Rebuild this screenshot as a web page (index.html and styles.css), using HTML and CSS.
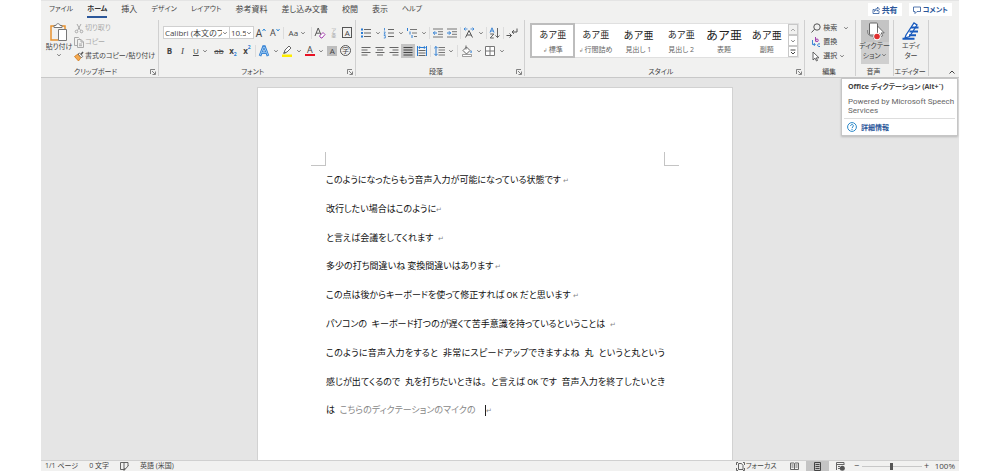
FILE: index.html
```html
<!DOCTYPE html>
<html lang="ja">
<head>
<meta charset="utf-8">
<meta name="viewport" content="width=device-width, initial-scale=1">
<title>文書</title>
<link rel="stylesheet" href="styles.css">
</head>
<body>
<svg class="defs" aria-hidden="true">
  <symbol id="chev" viewBox="0 0 6 6"><path d="M1.300 2.200l1.700 1.700 1.700-1.700" fill="none" stroke="#666" stroke-width=".9"/></symbol>
  <symbol id="launch" viewBox="0 0 6 6"><path d="M.5 5V.5H5M2 2l3 3M5.500 2.500v3h-3" fill="none" stroke="#666" stroke-width=".8"/></symbol>
</svg>
<div class="app">
  <header class="top">
    <nav class="tabs">
      <button class="tab kana">ファイル</button>
      <button class="tab kana active">ホーム</button>
      <button class="tab">挿入</button>
      <button class="tab kana">デザイン</button>
      <button class="tab kana">レイアウト</button>
      <button class="tab">参考資料</button>
      <button class="tab">差し込み文書</button>
      <button class="tab">校閲</button>
      <button class="tab">表示</button>
      <button class="tab kana">ヘルプ</button>
    </nav>
    <div class="actions">
      <button class="action"><svg width="8" height="8" viewBox="0 0 8 8" fill="none" stroke="#2b579a" stroke-width=".8"><path d="M2.500 3.500H1v4h6V5M2.500 5.500c0-2 1-3 3-3V1l2 2.200-2 2V4c-1.500 0-2.300.4-3 1.500z"/></svg>共有</button>
      <button class="action kana"><svg width="8" height="8" viewBox="0 0 8 8" fill="none" stroke="#2b579a" stroke-width=".8"><path d="M.5 1h7v4.500H4l-2 2v-2H.5z"/></svg>コメント</button>
    </div>
  </header>

  <div class="ribbon">
    <section class="group g-clip">
      <div class="clip">
        <button class="big">
          <svg width="18" height="19" viewBox="0 0 18 19" fill="none"><path d="M4 3H1v14h7M12 3h3v3" stroke="#e8912d" stroke-width="1.500"/><path d="M4 4.500V2.500h2c0-2.400 4-2.400 4 0h2v2z" fill="#fff" stroke="#777"/><path d="M8.500 6.500h8v11h-8z" fill="#fff" stroke="#777"/></svg>
          <span>貼り付け</span>
          <svg width="6" height="6"><use href="#chev"/></svg>
        </button>
        <div class="stack">
          <button class="cmd off"><svg width="10" height="11" viewBox="0 0 10 11" fill="none" stroke="#aaa"><path d="M3 1l3.500 6.500M7 1L3.500 7.500"/><circle cx="2.500" cy="8.500" r="1.300"/><circle cx="7.500" cy="8.500" r="1.300"/></svg>切り取り</button>
          <button class="cmd off"><svg width="10" height="11" viewBox="0 0 10 11" fill="none" stroke="#aaa"><path d="M3.500 8.500h-3v-8h4l1 1"/><path d="M3.500 2.500h3.500l2.500 2.500v5.500h-6zM7 2.500V5h2.500M5 7h3M5 8.700h3"/></svg>コピー</button>
          <button class="cmd"><svg width="10" height="11" viewBox="0 0 10 11"><path d="M.5 5.500L4 3l3 3.500L4.500 10z" fill="#f4a950" stroke="#d27a1b" stroke-width=".8"/><path d="M4 3l1.500-1 3.300 3.500-1.600 1.200z" fill="#fff" stroke="#555" stroke-width=".8"/><path d="M7 3.500L9 1" stroke="#555" stroke-width="1.500"/></svg>書式のコピー/貼り付け</button>
        </div>
      </div>
      <div class="gname"><span>クリップボード</span><svg width="6" height="6"><use href="#launch"/></svg></div>
    </section>

    <section class="group g-font">
      <div class="rows">
        <div class="row">
          <label class="combo c-font"><select aria-label="フォント"><option>Calibri (本文のフォント)</option></select><svg width="6" height="6"><use href="#chev"/></svg></label>
          <label class="combo c-size"><select aria-label="サイズ"><option>10.5</option></select><svg width="6" height="6"><use href="#chev"/></svg></label>
          <button class="tool t14 letter big-a">A<svg width="4" height="4" viewBox="0 0 4 4" fill="none" stroke="#2b88d8"><path d="M.5 3L2 1l1.500 2"/></svg></button>
          <button class="tool t14 letter">A<svg width="4" height="4" viewBox="0 0 4 4" fill="none" stroke="#2b88d8"><path d="M.5 1L2 3l1.500-2"/></svg></button>
          <i class="sep"></i>
          <button class="tool case">Aa<svg width="6" height="6"><use href="#chev"/></svg></button>
          <i class="sep"></i>
          <button class="tool t14" aria-label="書式のクリア"><svg width="12" height="12" viewBox="0 0 12 12" fill="none"><path d="M1 9l3.200-8L7 8M2.200 6.200h3.500" stroke="#555"/><path d="M5.500 9l3.500-3.500L11 7.500 8 11H7z" fill="#fff" stroke="#a33fae"/></svg></button>
          <button class="tool t14 ruby" aria-label="ルビ"><span>ア</span><span>亜</span></button>
          <button class="tool t13"><span class="boxed">A</span></button>
        </div>
        <div class="row">
          <button class="tool t13 bold">B</button>
          <button class="tool t13 italic">I</button>
          <button class="tool split"><u>U</u><svg width="6" height="6"><use href="#chev"/></svg></button>
          <button class="tool t14 strike">ab</button>
          <button class="tool t14 bold">x<sub>2</sub></button>
          <button class="tool t14 bold">x<sup>2</sup></button>
          <i class="sep"></i>
          <button class="tool split" aria-label="文字の効果"><svg width="12" height="12" viewBox="0 0 12 12" fill="none"><path d="M2 11L5.500 1.500h1L10 11M3.800 7.700h4.500" stroke="#2b7cd3" stroke-width="2.600"/><path d="M2 10.500L5.500 2h1L10 10.500M3.800 7.700h4.500" stroke="#b9dcf7" stroke-width=".8"/></svg><svg width="6" height="6"><use href="#chev"/></svg></button>
          <button class="tool split" aria-label="蛍光ペン"><svg width="12" height="12" viewBox="0 0 12 12"><path d="M1 9.500h10v2.500H1z" fill="#ffed00"/><path d="M3 8l1-3 4-4 2 2-4 4z" fill="#fff" stroke="#555" stroke-width=".9"/><path d="M2 9l1.500-3 2 2z" fill="#666"/></svg><svg width="6" height="6"><use href="#chev"/></svg></button>
          <button class="tool split"><span class="color-a">A</span><svg width="6" height="6"><use href="#chev"/></svg></button>
          <button class="tool t13"><span class="shade-a">A</span></button>
          <button class="tool t13"><span class="ring">字</span></button>
        </div>
      </div>
      <div class="gname"><span>フォント</span><svg width="6" height="6"><use href="#launch"/></svg></div>
    </section>

    <section class="group g-para">
      <div class="rows">
        <div class="row">
          <button class="tool split" aria-label="箇条書き"><svg width="12" height="12" viewBox="0 0 12 12"><path d="M4 2.500h7M4 6h7M4 9.500h7" stroke="#666"/><path d="M1 1.500h2v2H1zM1 5h2v2H1zM1 8.500h2v2H1z" fill="#2b7cd3"/></svg><svg width="6" height="6"><use href="#chev"/></svg></button>
          <button class="tool split" aria-label="段落番号"><svg width="12" height="12" viewBox="0 0 12 12"><path d="M5 2.500h6M5 6h6M5 9.500h6" stroke="#666"/><path d="M1.500 1v2.500M.8 5h1.500L1 7.200h1.500M.8 8.500h1.500v2.500H.8" fill="none" stroke="#2b7cd3" stroke-width=".8"/></svg><svg width="6" height="6"><use href="#chev"/></svg></button>
          <button class="tool split" aria-label="アウトライン"><svg width="12" height="12" viewBox="0 0 12 12"><path d="M4 2.500h7M6 6h5M8 9.500h3" stroke="#777"/><path d="M1.500 1v3M4 4.500v3M6 8v3" stroke="#2b7cd3"/></svg><svg width="6" height="6"><use href="#chev"/></svg></button>
          <i class="sep"></i>
          <button class="tool t14" aria-label="インデント解除"><svg width="12" height="12" viewBox="0 0 12 12"><path d="M1 2h10M6 4.700h5M6 7.300h5M1 10h10" stroke="#777"/><path d="M5 6H1.500M3 4.300L1.300 6 3 7.700" fill="none" stroke="#2b7cd3"/></svg></button>
          <button class="tool t14" aria-label="インデント"><svg width="12" height="12" viewBox="0 0 12 12"><path d="M1 2h10M6 4.700h5M6 7.300h5M1 10h10" stroke="#777"/><path d="M1 6h3.500M3 4.300L4.700 6 3 7.700" fill="none" stroke="#2b7cd3"/></svg></button>
          <i class="sep"></i>
          <button class="tool split" aria-label="拡張書式"><svg width="12" height="12" viewBox="0 0 12 12" fill="none"><path d="M2.500 10.500L6 3.500l3.500 7M4 8h4" stroke="#555"/><path d="M1 2h3.500M7.500 2H11M2.500.5L1 2l1.500 1.500M9.500.5L11 2 9.500 3.500" stroke="#2b7cd3" stroke-width=".8"/></svg><svg width="6" height="6"><use href="#chev"/></svg></button>
          <i class="sep"></i>
          <button class="tool t14" aria-label="並べ替え"><svg width="12" height="12" viewBox="0 0 12 12" fill="none"><path d="M1 5.500L3 .8l2 4.700M1.700 4h2.600" stroke="#2b7cd3" stroke-width=".9"/><path d="M1.200 7h3.600L1.200 11h3.600M8.500 1v9.500M6.500 8.500l2 2 2-2" stroke="#555" stroke-width=".9"/></svg></button>
          <i class="sep"></i>
          <button class="tool t14" aria-label="編集記号"><svg width="12" height="12" viewBox="0 0 12 12" fill="none" stroke="#555"><path d="M.5 8.500h5M3.500 6.500l2 2-2 2M11 1.500v3.500H6M8 3.200L6 5l2 1.800"/></svg></button>
        </div>
        <div class="row">
          <button class="tool t14" aria-label="左揃え"><svg width="12" height="12" viewBox="0 0 12 12"><path d="M1.500 2.500h9M1.500 5h6M1.500 7.500h9M1.500 10h6" stroke="#666"/></svg></button>
          <button class="tool t14" aria-label="中央揃え"><svg width="12" height="12" viewBox="0 0 12 12"><path d="M1.500 2.500h9M3 5h6M1.500 7.500h9M3 10h6" stroke="#666"/></svg></button>
          <button class="tool t14" aria-label="右揃え"><svg width="12" height="12" viewBox="0 0 12 12"><path d="M1.500 2.500h9M4.500 5h6M1.500 7.500h9M4.500 10h6" stroke="#666"/></svg></button>
          <button class="tool t14 on" aria-label="両端揃え"><svg width="12" height="12" viewBox="0 0 12 12"><path d="M1.500 2.500h9M1.500 5h9M1.500 7.500h9M1.500 10h9" stroke="#444"/></svg></button>
          <button class="tool t14" aria-label="均等割り付け"><svg width="12" height="12" viewBox="0 0 12 12" fill="none"><path d="M1.500 1v10M10.500 1v10M3 2.500h6M4 1.200L2.700 2.500 4 3.800M8 1.200l1.300 1.300L8 3.800" stroke="#2b7cd3"/><path d="M2.500 5.500h7M2.500 8h7M2.500 10.500h7" stroke="#666"/></svg></button>
          <i class="sep"></i>
          <button class="tool split" aria-label="行間"><svg width="12" height="12" viewBox="0 0 12 12" fill="none"><path d="M5.500 2.500H12M5.500 5H12M5.500 7.500H12M5.500 10H12" stroke="#777"/><path d="M3 1.500v9M1.300 3.200L3 1.500l1.700 1.700M1.300 8.800L3 10.500l1.700-1.700" stroke="#2b7cd3"/></svg><svg width="6" height="6"><use href="#chev"/></svg></button>
          <i class="sep wide"></i>
          <button class="tool split" aria-label="塗りつぶし"><svg width="12" height="12" viewBox="0 0 12 12"><path d="M2 5.500L5.500 2l3.500 3.500L5.500 9zM5 .5v4" fill="#fff" stroke="#555" stroke-width=".9"/><path d="M10 5c1.800 2.500 0 3.500-.7 2.500z" fill="#2b7cd3"/><path d="M1.500 9.500h9v2h-9z" fill="#fff" stroke="#777" stroke-width=".7"/></svg><svg width="6" height="6"><use href="#chev"/></svg></button>
          <button class="tool split" aria-label="罫線"><svg width="12" height="12" viewBox="0 0 12 12"><path d="M1.500 1.500h9v9h-9zM6 1.500v9M1.500 6h9" fill="#fff" stroke="#777"/></svg><svg width="6" height="6"><use href="#chev"/></svg></button>
        </div>
      </div>
      <div class="gname"><span>段落</span><svg width="6" height="6"><use href="#launch"/></svg></div>
    </section>

    <section class="group g-style">
      <div class="gallery">
        <button class="style picked"><span class="s9">あア亜</span><small><b class="mark">↲</b> 標準</small></button>
        <button class="style"><span class="s9">あア亜</span><small><b class="mark">↲</b> 行間詰め</small></button>
        <button class="style"><span class="s10">あア亜</span><small>見出し 1</small></button>
        <button class="style"><span class="s9">あア亜</span><small>見出し 2</small></button>
        <button class="style"><span class="s12">あア亜</span><small>表題</small></button>
        <button class="style"><span class="s10">あア亜</span><small>副題</small></button>
        <div class="scroller">
          <button class="dim" aria-label="上へ"><svg width="6" height="6" viewBox="0 0 6 6"><path d="M1 4l2-2 2 2" fill="none" stroke="#aaa"/></svg></button>
          <button aria-label="下へ"><svg width="6" height="6"><use href="#chev"/></svg></button>
          <button aria-label="その他"><svg width="6" height="6" viewBox="0 0 6 6"><path d="M.5 1h5M1 3l2 2 2-2" fill="none" stroke="#444"/></svg></button>
        </div>
      </div>
      <div class="gname"><span>スタイル</span><svg width="6" height="6"><use href="#launch"/></svg></div>
    </section>

    <section class="group g-edit">
      <div class="stack">
        <button class="cmd"><svg width="10" height="11" viewBox="0 0 10 11" fill="none" stroke="#555"><circle cx="6" cy="4" r="3.200"/><path d="M3.500 6.300L.5 9.500"/></svg><span>検索</span><svg class="far" width="6" height="6"><use href="#chev"/></svg></button>
        <button class="cmd"><svg width="10" height="11" viewBox="0 0 10 11" fill="none"><path d="M4.500 0v4.500" stroke="#a33fae"/><circle cx="6" cy="3.300" r="1.300" stroke="#a33fae"/><path d="M1.500 3v4.500h2.500M2.800 6l1.500 1.500L2.800 9" stroke="#2b7cd3" stroke-width=".9"/><path d="M9 7c-3-1-3.500 3 0 2.500" stroke="#2b7cd3"/></svg><span>置換</span></button>
        <button class="cmd"><svg width="10" height="11" viewBox="0 0 10 11"><path d="M2 1v8l2-1.800L5.500 10l1-.5-1.200-2.700H8z" fill="#fff" stroke="#555" stroke-width=".9"/></svg><span>選択</span><svg width="6" height="6"><use href="#chev"/></svg></button>
      </div>
      <div class="gname"><span>編集</span></div>
    </section>

    <section class="group g-voice">
      <button class="tall pressed" aria-describedby="tip">
        <svg width="20" height="20" viewBox="0 0 20 20"><path d="M2.500 9v2c0 6 12 6 12 0V9M8.500 15.500V18" fill="none" stroke="#888"/><rect x="4.500" y="2" width="8" height="12" rx="1" fill="#fff" stroke="#666"/><path d="M12.500 5v9.500l2.200-2 1.500 3 1.500-.8-1.500-2.800h3z" fill="#fff" stroke="#555" stroke-width=".8"/><circle cx="12" cy="15.500" r="3.700" fill="#fff"/><circle cx="12" cy="15.500" r="2.800" fill="#e03030"/></svg>
        <span>ディクテー<br>ション<svg width="6" height="6"><use href="#chev"/></svg></span>
      </button>
      <div class="gname"><span>音声</span></div>
    </section>

    <section class="group g-editor">
      <button class="tall">
        <svg width="20" height="20" viewBox="0 0 20 20"><path d="M5 14L13 2l3 2L8.500 15.500 4 17z" fill="#fff" stroke="#185abd" stroke-width="1.300"/><path d="M10 6.500h7.500M8.500 10.500h8.500M8 14.200h7M1.500 17.800h12" stroke="#185abd" stroke-width="2"/></svg>
        <span>エディ<br>ター</span>
      </button>
      <div class="gname"><span>エディター</span></div>
    </section>
    <div class="fold"><button aria-label="リボンを折りたたむ"><svg width="8" height="6" viewBox="0 0 8 6"><path d="M1.500 4.500L4 2l2.500 2.500" fill="none" stroke="#444"/></svg></button></div>

    <aside class="tip" id="tip" role="tooltip">
      <strong>Office ディクテーション (Alt+`)</strong>
      <p>Powered by Microsoft Speech<br>Services</p>
      <a href="#more"><svg width="10" height="10" viewBox="0 0 10 10" fill="none" stroke="#2b88c8"><circle cx="5" cy="5" r="4.400"/><path d="M3.600 4c0-2 2.800-2 2.800-.2C6.400 5 5 5 5 6.200M5 7v1"/></svg>詳細情報</a>
    </aside>
  </div>

  <main class="desk">
    <article class="page">
      <div class="corners"><i class="corner left"></i><i class="corner right"></i></div>
      <div class="text">
        <p>このようになったらもう音声入力が可能になっている状態です <i>↵</i></p>
        <p>改行したい場合はこのように<i>↵</i></p>
        <p>と言えば会議をしてくれます&ensp;<i>↵</i></p>
        <p>多少の打ち間違いね 変換間違いはあります <i>↵</i></p>
        <p>この点は後からキーボードを使って修正すれば <span class="latin">OK</span> だと思います <i>↵</i></p>
        <p>パソコンの&ensp;キーボード打つのが遅くて苦手意識を持っているということは&ensp;<i>↵</i></p>
        <p class="long">このように音声入力をすると&ensp;非常にスピードアップできますよね&ensp;丸&ensp;というと丸という<br>感じが出てくるので&ensp;丸を打ちたいときは。&ensp;と言えば <span class="latin">OK</span> です&ensp;音声入力を終了したいとき<br></p>
        <p>は&ensp;<span class="pending">こちらのディクテーションのマイクの</span>&ensp;&ensp;<b class="caret"></b><i>↵</i></p>
      </div>
    </article>
  </main>

  <footer class="status">
    <span>1/1 ページ</span>
    <span>0 文字</span>
    <svg width="9" height="9" viewBox="0 0 9 9" fill="none" stroke="#555" stroke-width=".9"><path d="M4 7.500H.5v-7H4v7M4 .500h4v3.500M4 8.500l4.500-5M4 8.500l1-2.500"/></svg>
    <span>英語 (米国)</span>
    <div class="views">
      <button class="view"><svg width="9" height="9" viewBox="0 0 9 9" fill="none" stroke="#555" stroke-width=".9"><path d="M2.500 1.500h3l1.500 2v4H2.500zM2 .5H.5V3M7 .5h1.500V3M.5 6v2.500H2M8.500 6v2.500H7"/></svg>フォーカス</button>
      <button class="view v23" aria-label="閲覧モード"><svg width="9" height="9" viewBox="0 0 9 9" fill="none" stroke="#666"><path d="M.5 1h3.500l.5.500.5-.5h3.500v6.500H5l-.5.500-.5-.5H.5zM4.500 1.500V8M1.500 3h2M1.500 5h2M5.500 3h2M5.500 5h2"/></svg></button>
      <button class="view v23 on" aria-label="印刷レイアウト"><svg width="9" height="9" viewBox="0 0 9 9" fill="none" stroke="#444"><path d="M1.500.5h6v8h-6zM2.500 2.500h4M2.500 4.500h4M2.500 6.500h4"/></svg></button>
      <button class="view v23" aria-label="Web レイアウト"><svg width="9" height="9" viewBox="0 0 9 9"><path d="M.5 8V.5h7.500V3M.5 2.500H8M2 4.500h2M2 6.500h2" fill="none" stroke="#666"/><circle cx="6.300" cy="6.300" r="2.500" fill="#555"/></svg></button>
      <button class="view zoom">−</button>
      <input class="slider" type="range" min="0" max="200" value="100" aria-label="ズーム">
      <button class="view zoom">+</button>
      <span class="pct">100%</span>
    </div>
  </footer>
</div>
</body>
</html>
```

FILE: styles.css
```css
* { box-sizing: border-box; }
body {
  margin: 0;
  background: #fff;
  color: #444;
  font: 8px/10px "Open Sans", "Noto Sans CJK JP", sans-serif;
  font-feature-settings: "palt";
}
button, select {
  border: 0;
  padding: 0;
  margin: 0;
  background: none;
  color: inherit;
  font: inherit;
  font-feature-settings: inherit;
  white-space: nowrap;
}
svg { flex: none; display: block; }
p { margin: 0; }
.defs { position: absolute; width: 0; height: 0; }

.app {
  display: flex;
  flex-direction: column;
  min-height: 100vh;
  margin: 0 41px;
  background: #f1f1f0;
}

/* tabs */
.top { display: flex; justify-content: space-between; align-items: flex-start; height: 20px; padding: 0 7px 0 8px; border-top: 1px solid #e4e4e4; }
.tabs { display: flex; gap: 14px; padding-top: 3px; }
.tab { height: 14px; padding-bottom: 2px; border-bottom: 2px solid transparent; }
.kana { font-size: 7px; }
.tab.active { font-weight: 700; color: #333; border-color: #2b579a; }
.actions { display: flex; gap: 7px; padding-top: 2px; }
.action { display: flex; align-items: center; gap: 2px; height: 13px; padding: 0 4px; background: #fff; color: #2b579a; font-weight: 700; }

/* ribbon */
.ribbon { position: relative; display: flex; height: 58px; border-bottom: 1px solid #c8c8c8; }
.group { display: flex; flex-direction: column; justify-content: space-between; min-width: 0; border-right: 1px solid #d0d0d0; margin-bottom: 1px; }
.g-clip { flex: 117 1 0; }
.g-font { flex: 196 1 0; }
.g-para { flex: 169 1 0; }
.g-style { flex: 279 1 0; }
.g-edit { flex: 50 1 0; }
.g-voice { flex: 37 1 0; }
.g-editor { flex: 34 1 0; }
.fold { flex: 27 1 0; display: flex; align-items: flex-end; justify-content: flex-end; padding: 0 3px 2px 0; }
.gname { display: flex; align-items: center; height: 9px; padding-right: 2px; font-size: 7px; line-height: 9px; }
.gname span { flex: 1; text-align: center; white-space: nowrap; }

.clip { display: flex; padding-left: 4px; gap: 1px; font-size: 7px; }
.big { display: flex; flex-direction: column; align-items: center; width: 28px; padding-top: 3px; }
.stack { display: flex; flex-direction: column; padding-top: 1px; }
.cmd { display: flex; align-items: center; gap: 1px; height: 14px; }
.cmd.off { color: #aaa; }

.rows { display: flex; flex-direction: column; gap: 5px; padding-top: 6px; }
.g-font .rows { padding-left: 4px; }
.g-para .rows { padding-left: 3px; }
.row { display: flex; align-items: center; height: 13px; }
.combo { position: relative; height: 13px; background: #fff; border: 1px solid #d0d0d0; }
.combo select { display: block; appearance: none; width: 100%; height: 11px; padding: 0 7px 0 1px; overflow: hidden; text-overflow: clip; outline: 0; line-height: 11px; }
.combo svg { position: absolute; right: 1px; top: 3px; background: #fff; }
.c-font { width: 67px; }
.c-size { width: 24px; border-left: 0; }
.tool { display: flex; align-items: center; justify-content: center; flex: none; height: 14px; font-size: 8px; }
.t13 { width: 13px; }
.t14 { width: 14px; }
.split { width: 23px; gap: 3px; }
.case { width: 25px; gap: 2px; }
.sep { width: 1px; height: 12px; margin: 0 1px; background: #dcdcdc; }
.sep.wide { margin: 0 2px; }
.letter { align-items: flex-start; font-size: 9px; line-height: 14px; }
.letter svg { margin-top: 2px; }
.big-a { font-size: 10px; }
.ruby { flex-direction: column; font-size: 5px; line-height: 5px; color: #999; }
.boxed { width: 10px; border: 1px solid #555; line-height: 9px; text-align: center; }
.bold { font-weight: 700; }
.italic { font-style: italic; font-family: "Liberation Serif", serif; font-size: 9px; }
.strike { text-decoration: line-through; }
.tool sub, .tool sup { font-size: 5px; line-height: 5px; color: #2b7cd3; }
.tool sub { align-self: flex-end; padding-bottom: 1px; }
.tool sup { align-self: flex-start; padding-top: 1px; }
.color-a { width: 10px; border-bottom: 2px solid #e81123; font-size: 9px; line-height: 9px; text-align: center; }
.shade-a { width: 10px; background: #bdbdbd; text-align: center; }
.ring { width: 11px; border: 1px solid #555; border-radius: 50%; font-size: 7px; line-height: 9px; text-align: center; }
.on { background: #c4c4c4; }

.gallery { display: flex; height: 35px; margin: 3px 5px 0; background: #fff; border: 1px solid #e0e0e0; color: #222; }
.style { flex: 1; display: flex; flex-direction: column; align-items: center; min-width: 0; }
.style.picked { outline: 2px solid #bdbdbd; outline-offset: -1px; }
.style span { height: 20px; line-height: 21px; font-family: "Noto Sans CJK JP", sans-serif; font-feature-settings: normal; }
.style small { font-size: 7px; line-height: 12px; color: #666; }
.mark { font-size: 5px; font-weight: 400; }
.style .s9 { font-size: 9px; }
.style .s10 { font-size: 10px; }
.style .s12 { font-size: 12px; }
.scroller { display: flex; flex-direction: column; width: 10px; }
.scroller button { flex: 1; display: grid; place-items: center; border: 1px solid #c8c8c8; background: #fff; }
.scroller .dim { background: #f1f1f0; }

.g-edit .stack { padding-left: 6px; font-size: 7px; }
.g-edit .cmd { gap: 2px; }
.far { margin-left: 4px; }
.tall { display: flex; flex-direction: column; align-items: center; align-self: center; width: 28px; height: 44px; padding-top: 1px; font-size: 7px; }
.tall span { text-align: center; }
.tall span svg { display: inline-block; }
.pressed { background: linear-gradient(#c4c4c4 50%, #cfcfcf 50%); }

.tip { position: absolute; z-index: 1; top: 58px; right: 1px; width: 117px; padding: 3px 2px 0; background: #fff; border: 1px solid #c6c6c6; box-shadow: 0 1px 2px #0003; line-height: 9px; }
.tip strong { display: block; padding: 0 4px; font-size: 7px; white-space: nowrap; }
.tip p { margin: 6px 0 3px; padding-left: 4px; color: #666; font-family: Roboto, sans-serif; white-space: nowrap; }
.tip a { display: flex; align-items: center; gap: 4px; height: 17px; padding-left: 3px; border-top: 1px solid #ddd; color: #2b579a; font-size: 7px; font-weight: 700; text-decoration: none; }

/* document */
.desk { flex: 1; display: flex; justify-content: center; padding: 9px 10px 0 0; background: #e5e5e5; }
.page { width: 476px; padding: 64px 53px 0; background: #fff; border: 1px solid #d2d2d2; border-bottom: 0; }
.corners { display: flex; justify-content: space-between; }
.corner { width: 15px; height: 14px; border-bottom: 1px solid #c4c4c4; }
.corner.left { border-right: 1px solid #c4c4c4; }
.corner.right { border-left: 1px solid #c4c4c4; }
.text { padding: 0 14px 0 15px; color: #111; font-family: "Noto Sans CJK JP", sans-serif; font-size: 9px; line-height: 3.2; white-space: nowrap; }
.text i { font-style: normal; font-size: 7px; color: #888; }
.long { text-align: justify; text-align-last: justify; }
.latin { font-size: 8px; }
.pending { color: #888; }
.caret { display: inline-block; width: 1px; height: 11px; background: #222; vertical-align: middle; }

/* status bar */
.status { display: flex; align-items: center; gap: 11px; height: 11px; padding: 0 4px; border-top: 1px solid #d0d0d0; font-size: 7px; line-height: 10px; white-space: nowrap; }
.views { display: flex; align-items: center; margin-left: auto; }
.view { display: flex; align-items: center; justify-content: center; gap: 1px; height: 10px; }
.view:first-child { margin-right: 6px; }
.v23 { width: 23px; }
.zoom { width: 10px; font-size: 9px; }
.slider { appearance: none; width: 60px; height: 10px; margin: 0; background: linear-gradient(#c8c8c8, #c8c8c8) center / 100% 1px no-repeat; }
.slider::-webkit-slider-thumb { appearance: none; width: 3px; height: 7px; background: #555; }
.pct { margin-left: 3px; font-size: 8px; }
```
